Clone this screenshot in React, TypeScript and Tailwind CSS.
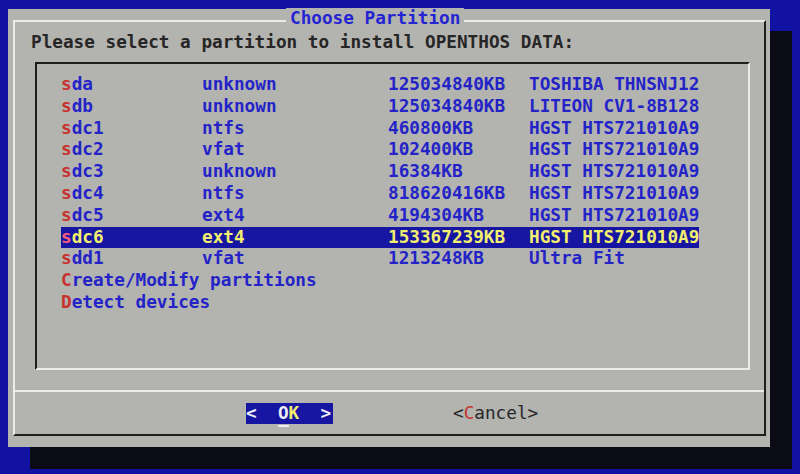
import React from 'react'

const rows = [
  { name: 'sda', fs: 'unknown', size: '125034840KB', model: 'TOSHIBA THNSNJ12' },
  { name: 'sdb', fs: 'unknown', size: '125034840KB', model: 'LITEON CV1-8B128' },
  { name: 'sdc1', fs: 'ntfs', size: '460800KB', model: 'HGST HTS721010A9' },
  { name: 'sdc2', fs: 'vfat', size: '102400KB', model: 'HGST HTS721010A9' },
  { name: 'sdc3', fs: 'unknown', size: '16384KB', model: 'HGST HTS721010A9' },
  { name: 'sdc4', fs: 'ntfs', size: '818620416KB', model: 'HGST HTS721010A9' },
  { name: 'sdc5', fs: 'ext4', size: '4194304KB', model: 'HGST HTS721010A9' },
  { name: 'sdc6', fs: 'ext4', size: '153367239KB', model: 'HGST HTS721010A9' },
  { name: 'sdd1', fs: 'vfat', size: '1213248KB', model: 'Ultra Fit' },
]

const selected = 'sdc6'

function Hotkey({ text, active }: { text: string; active?: boolean }) {
  return (
    <>
      <span className={active ? 'text-[#ff5c7c]' : 'text-[#c8322e]'}>{text[0]}</span>
      <span>{text.slice(1)}</span>
    </>
  )
}

export default function App() {
  return (
    <div
      className="w-[800px] h-[474px] overflow-hidden bg-[#1111a2] pl-[8px] pt-[9px] font-bold text-[17.7px] leading-[22px]"
      style={{ fontFamily: '"DejaVu Sans Mono", "Liberation Mono", monospace' }}
    >
      <div className="w-[762px] h-[438px] bg-[#b3b3af] shadow-[22px_22px_0_#0b0b16] pt-[11px] pl-[5px] pr-[4px] pb-[11px] flex">
        <div className="relative flex-1 flex flex-col border-2 border-t-[#ececea] border-l-[#ececea] border-r-[#1e1e1e] border-b-[#1e1e1e]">
          {/* title sits over the top border */}
          <div className="absolute left-[271px] top-[-14px] px-[4px] bg-[#b3b3af] text-[#2424d2] leading-[20px]">
            Choose Partition
          </div>

          <div className="mt-[9px] pl-[16px] text-[#262626] whitespace-pre">
            Please select a partition to install OPENTHOS DATA:
          </div>

          <div className="mt-[9px] ml-[20px] mr-[14px] h-[308px] border-2 border-t-[#1e1e1e] border-l-[#1e1e1e] border-r-[#ececea] border-b-[#ececea] pt-[10px] pl-[24px] leading-[21.8px] text-[#2323c8]">
            {rows.map((r) => {
              const on = r.name === selected
              return (
                <div key={r.name} className="flex">
                  <div className={`flex whitespace-pre ${on ? 'bg-[#1616a2] text-[#f2ee6e]' : ''}`}>
                    <span className="w-[141px]">
                      <Hotkey text={r.name} active={on} />
                    </span>
                    <span className="w-[186px]">{r.fs}</span>
                    <span className="w-[141px]">{r.size}</span>
                    <span className="w-[170px]">{r.model}</span>
                  </div>
                </div>
              )
            })}
            <div>
              <Hotkey text="Create/Modify partitions" />
            </div>
            <div>
              <Hotkey text="Detect devices" />
            </div>
          </div>

          <div className="mt-[20px] h-[2px] bg-[#ececea]" />

          <div className="flex-1 flex items-center pl-[231px]">
            <div className="flex h-[21px] w-[87px] bg-[#1616a2] items-center whitespace-pre text-[#ececf4]">
              <span>{'<  '}</span>
              <span className="relative">
                O
                <span className="absolute left-0 right-0 bottom-[-3px] h-[2px] bg-[#ececf4]" />
              </span>
              <span className="text-[#f2ee6e]">K</span>
              <span>{'  >'}</span>
            </div>
            <div className="ml-[120px] whitespace-pre font-normal text-[#262626]">
              {'<'}
              <span className="text-[#c8322e]">C</span>
              {'ancel>'}
            </div>
          </div>
        </div>
      </div>
    </div>
  )
}
